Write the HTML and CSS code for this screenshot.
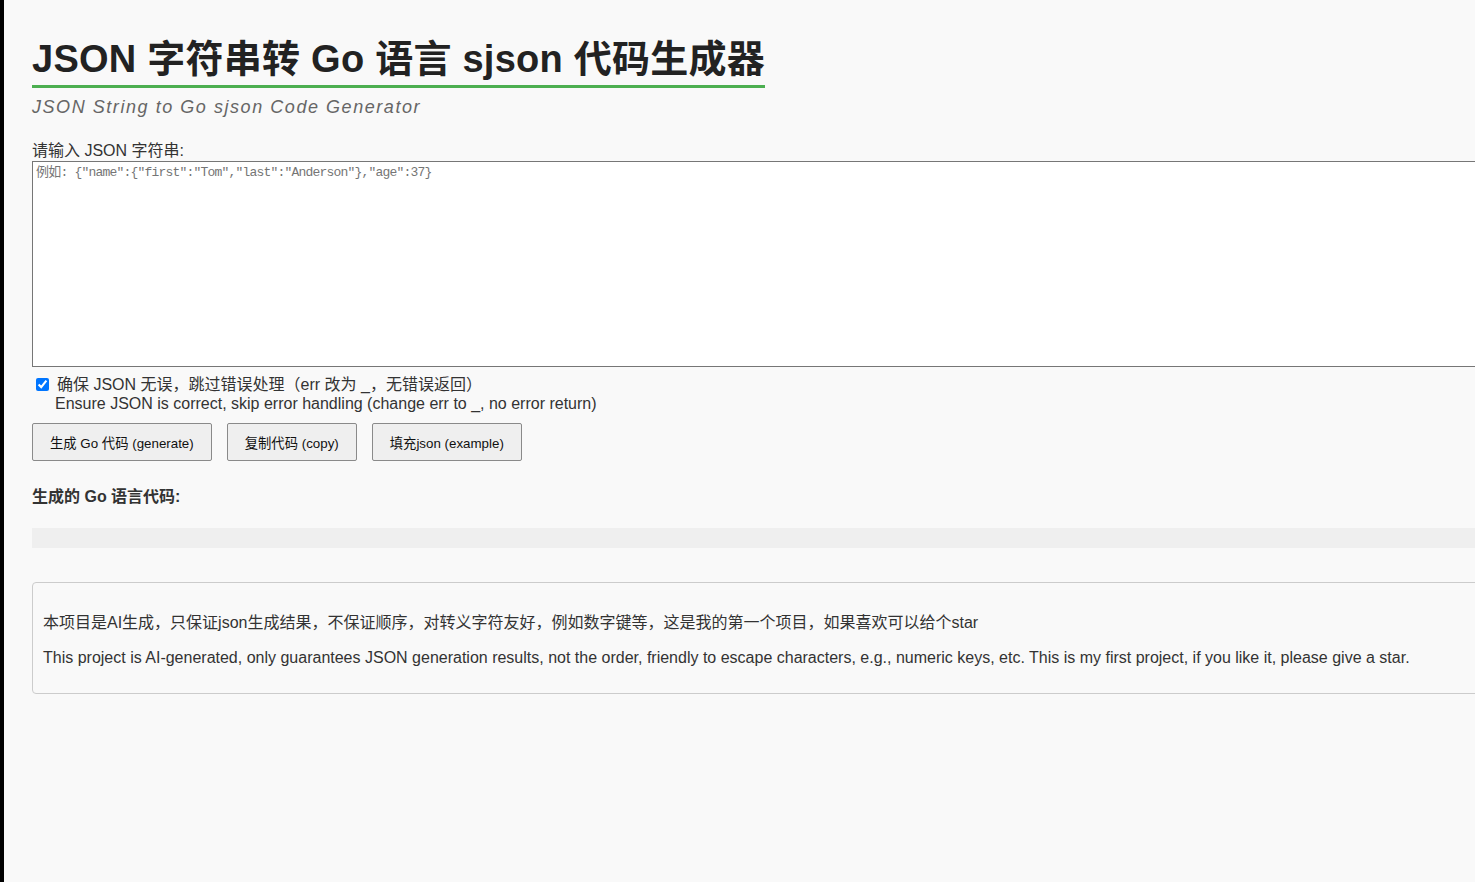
FILE: index.html
```html
<!DOCTYPE html>
<html lang="zh-CN">
<head>
<meta charset="utf-8">
<title>JSON 字符串转 Go 语言 sjson 代码生成器</title>
<link rel="stylesheet" href="styles.css">
</head>
<body>
<div class="page">
  <header class="head">
    <h1 class="title">JSON 字符串转 Go 语言 sjson 代码生成器</h1>
    <p class="subtitle">JSON String to Go sjson Code Generator</p>
  </header>

  <label class="label" for="json">请输入 JSON 字符串:</label>
  <textarea id="json" class="input" placeholder='例如: {"name":{"first":"Tom","last":"Anderson"},"age":37}'></textarea>

  <div class="option">
    <input type="checkbox" id="skip" class="check" checked>
    <label for="skip" class="option-text">
      <span class="option-cn">确保 JSON 无误，跳过错误处理（err 改为 _，无错误返回）</span>
      <span class="option-en">Ensure JSON is correct, skip error handling (change err to _, no error return)</span>
    </label>
  </div>

  <div class="actions">
    <button class="btn">生成 Go 代码 (generate)</button>
    <button class="btn">复制代码 (copy)</button>
    <button class="btn">填充json (example)</button>
  </div>

  <h3 class="out-title">生成的 Go 语言代码:</h3>
  <pre class="output"></pre>

  <div class="note">
    <p>本项目是AI生成，只保证json生成结果，不保证顺序，对转义字符友好，例如数字键等，这是我的第一个项目，如果喜欢可以给个star</p>
    <p>This project is AI-generated, only guarantees JSON generation results, not the order, friendly to escape characters, e.g., numeric keys, etc. This is my first project, if you like it, please give a star.</p>
  </div>
</div>
</body>
</html>
```

FILE: styles.css
```css
html {
  overflow: hidden;
  background: #f9f9f9;
}
body {
  margin: 0;
  min-height: 882px;
  border-left: 4px solid #000;
  background: #f9f9f9;
  color: #333;
  font-family: "Liberation Sans", Arial, "Noto Sans CJK SC", sans-serif;
  font-size: 16px;
}
.page {
  width: 1480px;
  padding: 20px 0 0 28px;
}
.head {
  margin-bottom: 23px;
}
.title {
  display: inline-block;
  margin: 0;
  padding: 15px 0 2px;
  font-size: 38px;
  line-height: 48px;
  letter-spacing: 0.25px;
  font-weight: bold;
  color: #222;
  border-bottom: 3px solid #4caf50;
}
.subtitle {
  margin: 9px 0 0;
  font-size: 18px;
  line-height: 21px;
  font-style: italic;
  letter-spacing: 1.55px;
  color: #666;
}
.label {
  display: block;
  font-size: 16px;
  line-height: 20px;
  color: #333;
}
.input {
  display: block;
  box-sizing: border-box;
  width: 100%;
  height: 206px;
  margin: 0;
  padding: 3px 3px 1px;
  border: 1px solid #767676;
  border-radius: 0;
  background: #fff;
  font-family: "Liberation Mono", "Noto Sans CJK SC", monospace;
  font-size: 13px;
  line-height: 16px;
  letter-spacing: -0.8px;
  resize: none;
}
.input::placeholder {
  color: #757575;
}
.option {
  display: flex;
  align-items: flex-start;
  margin-top: 8px;
}
.check {
  width: 13px;
  height: 13px;
  margin: 3px 8px 0 4px;
  accent-color: #0075ff;
}
.option-text {
  display: flex;
  flex-direction: column;
  line-height: 19px;
  color: #333;
}
.option-en {
  margin-left: -2px;
}
.actions {
  display: flex;
  gap: 15px;
  margin-top: 10px;
}
.btn {
  height: 38px;
  padding: 0 17px;
  border: 1px solid #8a8a8a;
  border-radius: 2px;
  background: #efefef;
  color: #111;
  font-family: "Liberation Sans", Arial, "Noto Sans CJK SC", sans-serif;
  font-size: 13.33px;
}
.out-title {
  margin: 26px 0 0;
  font-size: 16px;
  line-height: 20px;
  font-weight: bold;
  color: #333;
}
.output {
  height: 20px;
  margin: 21px 0 0;
  background: #efefef;
}
.note {
  margin-top: 34px;
  padding: 14px 10px 10px;
  border: 1px solid #ccc;
  border-radius: 4px;
}
.note p {
  margin: 16px 0;
  line-height: 19px;
  color: #333;
}
```
